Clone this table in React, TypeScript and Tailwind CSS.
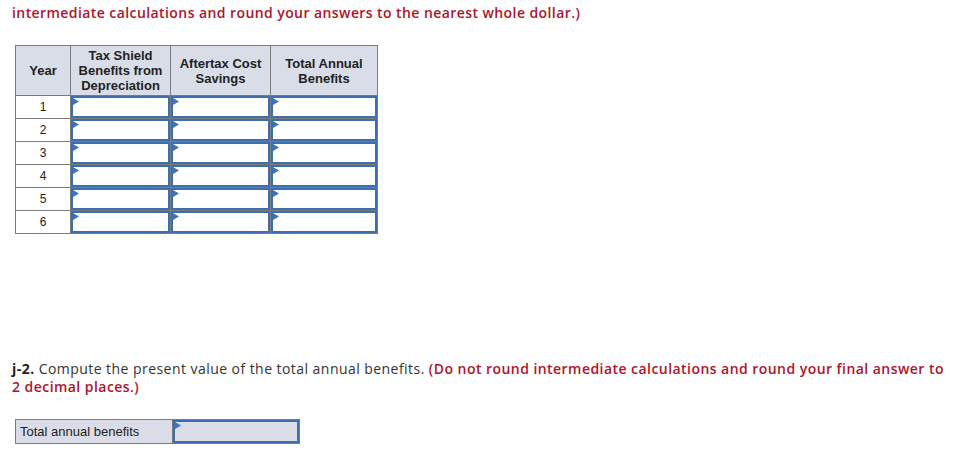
import React from 'react';

const prose = { fontFamily: '"Open Sans", "Lato", sans-serif' };
const arial = { fontFamily: '"Liberation Sans", Arial, sans-serif' };

function Flag() {
  return (
    <svg className="absolute left-0 top-0" width="6" height="7" viewBox="0 0 6 7" aria-hidden>
      <path d="M0 0 L6 3.5 L0 7 Z" fill="#3b73c0" />
    </svg>
  );
}

function InputCell() {
  return (
    <td className="border border-[#7b7b7b] p-0">
      <div className="relative h-[22px] border-2 border-[#3d6fb0] bg-white">
        <Flag />
      </div>
    </td>
  );
}

export default function App() {
  const years = [1, 2, 3, 4, 5, 6];
  return (
    <div className="w-[972px] h-[463px] bg-white pl-[12px] pt-[4px] relative overflow-hidden">
      <p className="text-[14px] leading-[18px] font-semibold tracking-[0.42px] text-[#b0122a]" style={prose}>
        intermediate calculations and round your answers to the nearest whole dollar.)
      </p>

      <table className="mt-[23px] ml-[3px] border-collapse border border-[#7b7b7b] text-[13px] text-[#222]" style={arial}>
        <thead>
          <tr className="h-[50px] bg-[#d9dde8] text-center leading-[15px]">
            <th className="w-[55px] border border-[#7b7b7b] font-bold">Year</th>
            <th className="w-[100px] border border-[#7b7b7b] font-bold">
              Tax Shield
              <br />
              Benefits from
              <br />
              Depreciation
            </th>
            <th className="w-[100px] border border-[#7b7b7b] font-bold">
              Aftertax Cost
              <br />
              Savings
            </th>
            <th className="w-[107px] border border-[#7b7b7b] font-bold">
              Total Annual
              <br />
              Benefits
            </th>
          </tr>
        </thead>
        <tbody>
          {years.map((y) => (
            <tr key={y} className="h-[23px]">
              <td className="border border-[#7b7b7b] text-center align-middle text-[12px]">{y}</td>
              <InputCell />
              <InputCell />
              <InputCell />
            </tr>
          ))}
        </tbody>
      </table>

      <p className="mt-[126px] w-[935px] text-[14px] leading-[18px] tracking-[0.45px] text-[#333]" style={prose}>
        <span className="font-bold text-[#222]">j-2.</span> Compute the present value of the total annual benefits.{' '}
        <span className="font-semibold text-[#b0122a]">
          (Do not round intermediate calculations and round your final answer to 2 decimal places.)
        </span>
      </p>

      <table className="mt-[23px] ml-[3px] border-collapse text-[13px] text-[#222]" style={arial}>
        <tbody>
          <tr className="h-[24px]">
            <td className="w-[157px] border border-[#7b7b7b] bg-[#dadde8] px-[4px] align-middle">Total annual benefits</td>
            <td className="w-[127px] border border-[#7b7b7b] p-0">
              <div className="relative h-[23px] border-2 border-[#3d6fb0] bg-[#dadde8]">
                <Flag />
              </div>
            </td>
          </tr>
        </tbody>
      </table>
    </div>
  );
}
